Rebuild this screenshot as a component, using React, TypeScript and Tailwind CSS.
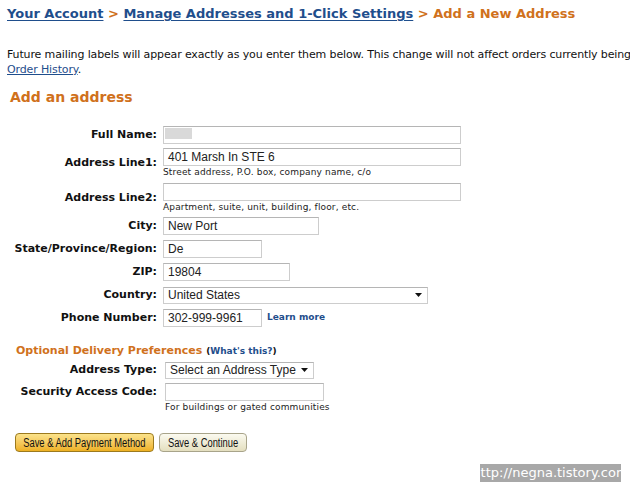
import type { ReactNode } from "react";

// Amazon "Add a New Address" form (old layout), recreated.

const verdana = "font-['DejaVu_Sans',Verdana,sans-serif]";
const arial = "font-['Liberation_Sans',Arial,sans-serif]";

function Field({
  label,
  children,
  gap = "ml-[6px]",
  align = "items-center",
  className = ""
}: {
  label: string;
  children: ReactNode;
  gap?: string;
  align?: string;
  className?: string;
}) {
  return (
    <div className={`flex ${align} ${className}`}>
      <div className="flex h-[18px] w-[157px] shrink-0 items-center justify-end text-right text-[11px] font-bold leading-[14px] text-[#111]">
        {label}
      </div>
      <div className={`${gap} flex flex-col`}>{children}</div>
    </div>
  );
}

function TextBox({ value, width }: { value?: string; width: string }) {
  return (
    <div
      className={`${width} flex h-[18px] items-center border border-[#cdcdcd] border-t-[#b5b5b5] bg-white pl-[4px] ${arial} text-[12px] text-[#222]`}
    >
      {value}
    </div>
  );
}

function SelectBox({ value, width }: { value: string; width: string }) {
  return (
    <div
      className={`${width} flex h-[17px] items-center justify-between border border-[#cdcdcd] border-t-[#b5b5b5] bg-white pl-[4px] pr-[5px] ${arial} text-[12px] text-[#222]`}
    >
      <span>{value}</span>
      <svg width="7" height="4" viewBox="0 0 7 4">
        <path d="M0 0h7L3.5 4z" fill="#111" />
      </svg>
    </div>
  );
}

function Hint({ children }: { children: ReactNode }) {
  return <div className="mt-[1px] text-[9px] leading-[11px] tracking-[0.15px] text-[#222]">{children}</div>;
}

export default function App() {
  return (
    <div className={`relative h-[482px] w-[630px] overflow-hidden bg-white ${verdana}`}>
      <div className="whitespace-nowrap px-[7px] pt-[5px] text-[13px] font-bold leading-[18px]">
        <a className="text-[#1f4e8c] underline underline-offset-2">Your Account</a>
        <span className="text-[#d0711c]"> &gt; </span>
        <a className="text-[#1f4e8c] underline underline-offset-2">Manage Addresses and 1-Click Settings</a>
        <span className="text-[#d0711c]"> &gt; Add a New Address</span>
      </div>

      <div className="mt-[24px] px-[7px] text-[11px] leading-[15px] tracking-[-0.13px] text-[#111]">
        <div className="w-[623px] overflow-hidden whitespace-nowrap">
          Future mailing labels will appear exactly as you enter them below. This change will not affect orders currently being
        </div>
        <div>
          <a className="text-[#1f4e8c] underline">Order History</a>.
        </div>
      </div>

      <div className="mt-[11px] px-[10px] text-[14px] font-bold leading-[18px] text-[#d0711c]">Add an address</div>

      <div className="mt-[20px]">
        <Field label="Full Name:">
          <div className="relative">
            <TextBox width="w-[298px]" />
            <div className="absolute left-[2px] top-[2px] h-[11px] w-[27px] bg-[#d9d9d9]" />
          </div>
        </Field>
        <Field label="Address Line1:" className="mt-[4px]">
          <TextBox value="401 Marsh In STE 6" width="w-[298px]" />
          <Hint>Street address, P.O. box, company name, c/o</Hint>
        </Field>
        <Field label="Address Line2:" className="mt-[5px]">
          <TextBox width="w-[298px]" />
          <Hint>Apartment, suite, unit, building, floor, etc.</Hint>
        </Field>
        <Field label="City:" className="mt-[4px]">
          <TextBox value="New Port" width="w-[156px]" />
        </Field>
        <Field label="State/Province/Region:" className="mt-[5px]">
          <TextBox value="De" width="w-[99px]" />
        </Field>
        <Field label="ZIP:" className="mt-[5px]">
          <TextBox value="19804" width="w-[127px]" />
        </Field>
        <Field label="Country:" className="mt-[5px]">
          <SelectBox value="United States" width="w-[265px]" />
        </Field>
        <Field label="Phone Number:" className="mt-[5px]">
          <div className="flex items-center">
            <TextBox value="302-999-9961" width="w-[99px]" />
            <a className="ml-[5px] text-[9px] font-bold text-[#1f4e8c]">Learn more</a>
          </div>
        </Field>
      </div>

      <div className="mt-[17px] pl-[16px] text-[11px] font-bold leading-[14px] text-[#d0711c]">
        Optional Delivery Preferences{" "}
        <span className="text-[9px] text-[#111]">
          (<a className="text-[#1f4e8c]">What&apos;s this?</a>)
        </span>
      </div>

      <div className="mt-[3px]">
        <Field label="Address Type:" gap="ml-[8px]">
          <SelectBox value="Select an Address Type" width="w-[149px]" />
        </Field>
        <Field label="Security Access Code:" gap="ml-[8px]" align="items-start" className="mt-[4px]">
          <TextBox width="w-[159px]" />
          <Hint>For buildings or gated communities</Hint>
        </Field>
      </div>

      <div className={`mt-[20px] flex gap-[5px] pl-[15px] ${arial} text-[12px] text-[#111]`}>
        <button
          type="button"
          className="flex h-[19px] w-[139px] items-center justify-center overflow-visible whitespace-nowrap rounded-[4px] border border-[#9c7a1e] bg-gradient-to-b from-[#fbe38a] to-[#eeb11f]"
        >
          <span className="inline-block scale-x-78">Save &amp; Add Payment Method</span>
        </button>
        <button
          type="button"
          className="flex h-[19px] w-[88px] items-center justify-center overflow-visible whitespace-nowrap rounded-[4px] border border-[#a8a48a] bg-gradient-to-b from-[#fbfaf0] to-[#e4dfbf]"
        >
          <span className="inline-block scale-x-78">Save &amp; Continue</span>
        </button>
      </div>

      <div className="absolute bottom-0 right-[9px] flex h-[18px] w-[141px] items-center justify-center bg-[#a8a8a8] font-['DejaVu_Sans',sans-serif] text-[13px] text-white">
        http://negna.tistory.com
      </div>
    </div>
  );
}
